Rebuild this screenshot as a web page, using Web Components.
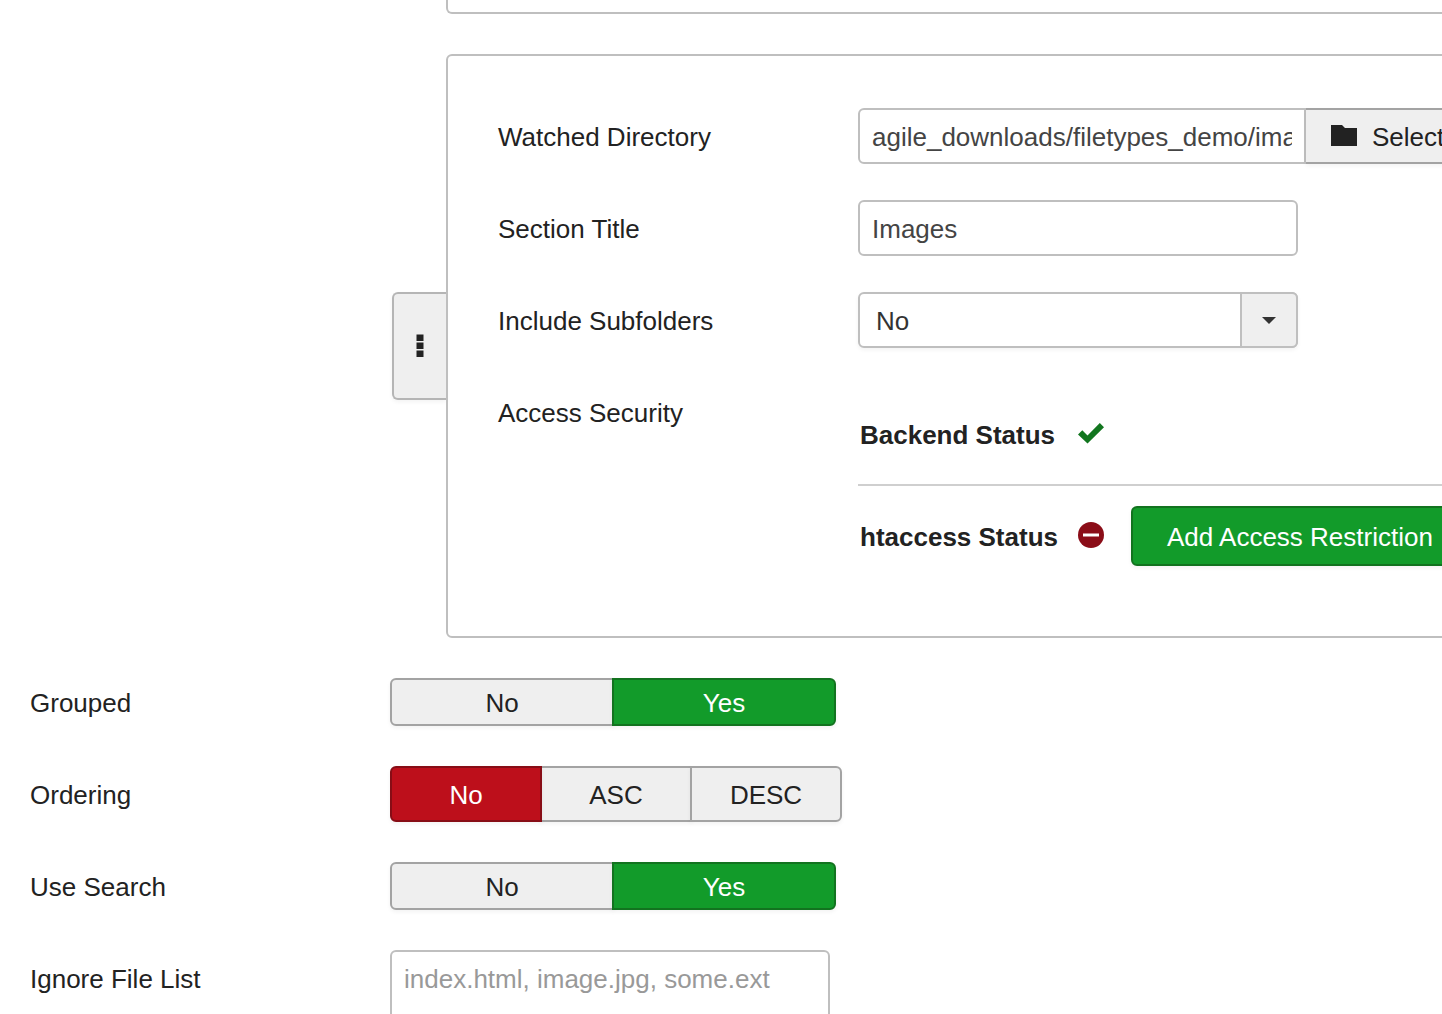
<!DOCTYPE html>
<html lang="en">
<head>
<meta charset="utf-8">
<title>Agile Downloads</title>
<style>
  html { overflow: hidden; }
  body {
    --line: #bfbfbf; --btn-line: #a3a3a3; --btn: #efefef;
    --green: #129b2a; --green-line: #12731f;
    --red: #bd0f1b; --red-line: #870d16;
    --label: 360px; --field: 440px;
    margin: 0; background: #fff; color: #222;
    font: 26px/36px "Liberation Sans", Arial, sans-serif;
  }
</style>
</head>
<body>
<settings-form>
  <sub-form slot="subforms" tail></sub-form>
  <sub-form slot="subforms" movable>
    <text-field label="Watched Directory" value="agile_downloads/filetypes_demo/images" browse="Select"></text-field>
    <text-field label="Section Title" value="Images"></text-field>
    <select-field label="Include Subfolders" options="No,Yes"></select-field>
    <status-field label="Access Security">
      <status-item name="Backend Status" state="ok"></status-item>
      <status-item name="htaccess Status" state="blocked" action="Add Access Restriction"></status-item>
    </status-field>
  </sub-form>
  <toggle-field label="Grouped" options="No,Yes" value="Yes"></toggle-field>
  <toggle-field label="Ordering" options="No,ASC,DESC" value="No" roomy></toggle-field>
  <toggle-field label="Use Search" options="No,Yes" value="Yes"></toggle-field>
  <area-field label="Ignore File List" placeholder="index.html, image.jpg, some.ext"></area-field>
</settings-form>

<script>
const base = `
  *, *::before { box-sizing: border-box; }
  :host { display: block; }
  .row { display: flex; align-items: flex-start; }
  .name { flex: none; width: var(--label); padding: 11px 0 9px; }
  .middle { align-items: center; }
  .middle .name { padding: 2px 0 0; }
  input, select, textarea, button { font: inherit; margin: 0; color: inherit; }
  input[type=text], select, textarea {
    display: block; width: var(--field); border: 2px solid var(--line); border-radius: 6px;
    background: #fff; color: #444; padding: 9px 12px 7px; outline-offset: 2px;
  }
  input[type=text], select { height: 56px; }
  button { border: 2px solid var(--btn-line); background: var(--btn); box-shadow: 0 2px 4px #0000000d; cursor: pointer; }
  svg { display: block; flex: none; }
`;

class Part extends HTMLElement {
  connectedCallback() {
    if (this.shadowRoot) return;
    this.attachShadow({ mode: "open" }).innerHTML = `<style>${base}${this.styles()}</style>${this.markup()}`;
  }
  styles() { return ""; }
  a(name) { return this.getAttribute(name) || ""; }
  list(name) { return this.a(name).split(","); }
}

customElements.define("settings-form", class extends Part {
  styles() { return `
    form { display: flex; flex-direction: column; gap: 40px; }
    .subs { display: flex; flex-direction: column; gap: 40px; padding-left: 392px; }
    .rows { display: flex; flex-direction: column; gap: 40px; padding: 0 30px; }`; }
  markup() { return `<form><div class="subs"><slot name="subforms"></slot></div><div class="rows"><slot></slot></div></form>`; }
});

customElements.define("sub-form", class extends Part {
  styles() { return `
    .wrap { display: flex; align-items: center; min-width: 1120px; }
    .card { flex: 1; display: flex; flex-direction: column; gap: 36px; padding: 52px 50px 50px; border: 2px solid var(--line); border-radius: 6px; }
    :host([tail]) .card { margin-left: 54px; height: 14px; padding: 0; border-top: 0; border-radius: 0 0 6px 6px; }
    button { flex: none; width: 54px; height: 108px; padding: 0 0 0 20px; border-color: #b5b5b5; border-right: 0; border-radius: 6px 0 0 6px; }`; }
  markup() {
    const handle = this.hasAttribute("movable")
      ? `<button type="button" aria-label="Move"><svg width="12" height="24" viewBox="0 0 12 24" fill="#222"><path d="M2.5 .5h7v6.500h-7zM2.500 8.500h7v6.500h-7zM2.500 16.500h7v6.500h-7z"/></svg></button>` : "";
    return `<div class="wrap">${handle}<div class="card"><slot></slot></div></div>`;
  }
});

customElements.define("text-field", class extends Part {
  styles() { return `
    .group { display: flex; }
    :host([browse]) input { width: 448px; border-radius: 6px 0 0 6px; }
    button { display: flex; align-items: center; gap: 14px; height: 56px; padding: 0 26px 0 24px; border-left: 0; border-radius: 0 6px 6px 0; }
    button span { padding-top: 2px; }`; }
  markup() {
    const browse = this.a("browse")
      ? `<button type="button"><svg width="28" height="24" viewBox="0 0 28 24" fill="#222"><path d="M1 1h11l3 3h12v18H1z"/></svg><span>${this.a("browse")}</span></button>` : "";
    return `<div class="row"><label class="name" for="f">${this.a("label")}</label><div class="group"><input id="f" type="text" value="${this.a("value")}">${browse}</div></div>`;
  }
});

customElements.define("select-field", class extends Part {
  styles() { return `
    .pick { display: grid; width: var(--field); }
    .pick > * { grid-area: 1 / 1; }
    select { appearance: none; padding: 9px 72px 7px 16px; color: #333; box-shadow: 0 2px 4px #0000000d; }
    .arrow { justify-self: end; display: grid; place-items: center; width: 58px; height: 56px; border: 2px solid var(--line); border-radius: 0 6px 6px 0; background: var(--btn); pointer-events: none; }`; }
  markup() { return `<div class="row"><label class="name" for="f">${this.a("label")}</label><div class="pick">
    <select id="f">${this.list("options").map(o => `<option>${o}</option>`).join("")}</select>
    <span class="arrow"><svg width="14" height="7" viewBox="0 0 14 7" fill="#333"><path d="M0 0h14L7 7z"/></svg></span></div></div>`; }
});

customElements.define("status-field", class extends Part {
  styles() { return `.items { flex: 1; }`; }
  markup() { return `<div class="row"><span class="name" id="n">${this.a("label")}</span><div class="items" role="group" aria-labelledby="n"><slot></slot></div></div>`; }
});

customElements.define("status-item", class extends Part {
  styles() { return `
    :host(:not(:first-child)) { border-top: 2px solid #cfcfcf; }
    .item { display: flex; align-items: center; height: 100px; padding-left: 2px; }
    strong { width: 218px; padding-top: 2px; }
    button { height: 60px; margin-left: 27px; padding: 2px 34px 0; border-color: var(--green-line); border-radius: 6px; background: var(--green); color: #fff; white-space: nowrap; }`; }
  markup() {
    const icon = this.a("state") === "ok"
      ? `<path fill="#12761f" d="M0 14.500 4.300 10.200l5.200 5.200L21.800 3.100 26 7.200 9.500 23.400z"/>`
      : `<circle cx="13" cy="13" r="13" fill="#8b0d18"/><path fill="#fff" d="M5 11.500h16v3H5z"/>`;
    const action = this.a("action") ? `<button type="button">${this.a("action")}</button>` : "";
    return `<div class="item"><strong>${this.a("name")}</strong><svg width="26" height="28" viewBox="0 0 26 28">${icon}</svg>${action}</div>`;
  }
});

customElements.define("toggle-field", class extends Part {
  styles() { return `
    .group { display: flex; }
    .opt { position: relative; display: grid; place-items: center; width: 224px; height: 48px; border: 2px solid var(--btn-line); background: var(--btn); box-shadow: 0 2px 4px #0000000d; cursor: pointer; }
    :host([roomy]) .opt { width: 152px; height: 56px; }
    .opt + .opt { margin-left: -2px; }
    .opt:first-child { border-radius: 6px 0 0 6px; }
    .opt:last-child { border-radius: 0 6px 6px 0; }
    .opt > * { grid-area: 1 / 1; }
    .opt span { padding-top: 2px; }
    input { appearance: none; width: 100%; height: 100%; cursor: pointer; }
    .opt:has(:checked) { z-index: 1; border-color: var(--green-line); background: var(--green); color: #fff; }
    .opt:has([value=No]:checked) { border-color: var(--red-line); background: var(--red); }`; }
  markup() { return `<div class="row middle"><span class="name" id="n">${this.a("label")}</span><div class="group" role="radiogroup" aria-labelledby="n">${
    this.list("options").map(o => `<label class="opt"><input type="radio" name="o" value="${o}"${o === this.a("value") ? " checked" : ""}><span>${o}</span></label>`).join("")}</div></div>`; }
});

customElements.define("area-field", class extends Part {
  styles() { return `textarea { height: 120px; resize: none; } textarea::placeholder { color: #999; }`; }
  markup() { return `<div class="row"><label class="name" for="f">${this.a("label")}</label><textarea id="f" placeholder="${this.a("placeholder")}"></textarea></div>`; }
});
</script>
</body>
</html>
